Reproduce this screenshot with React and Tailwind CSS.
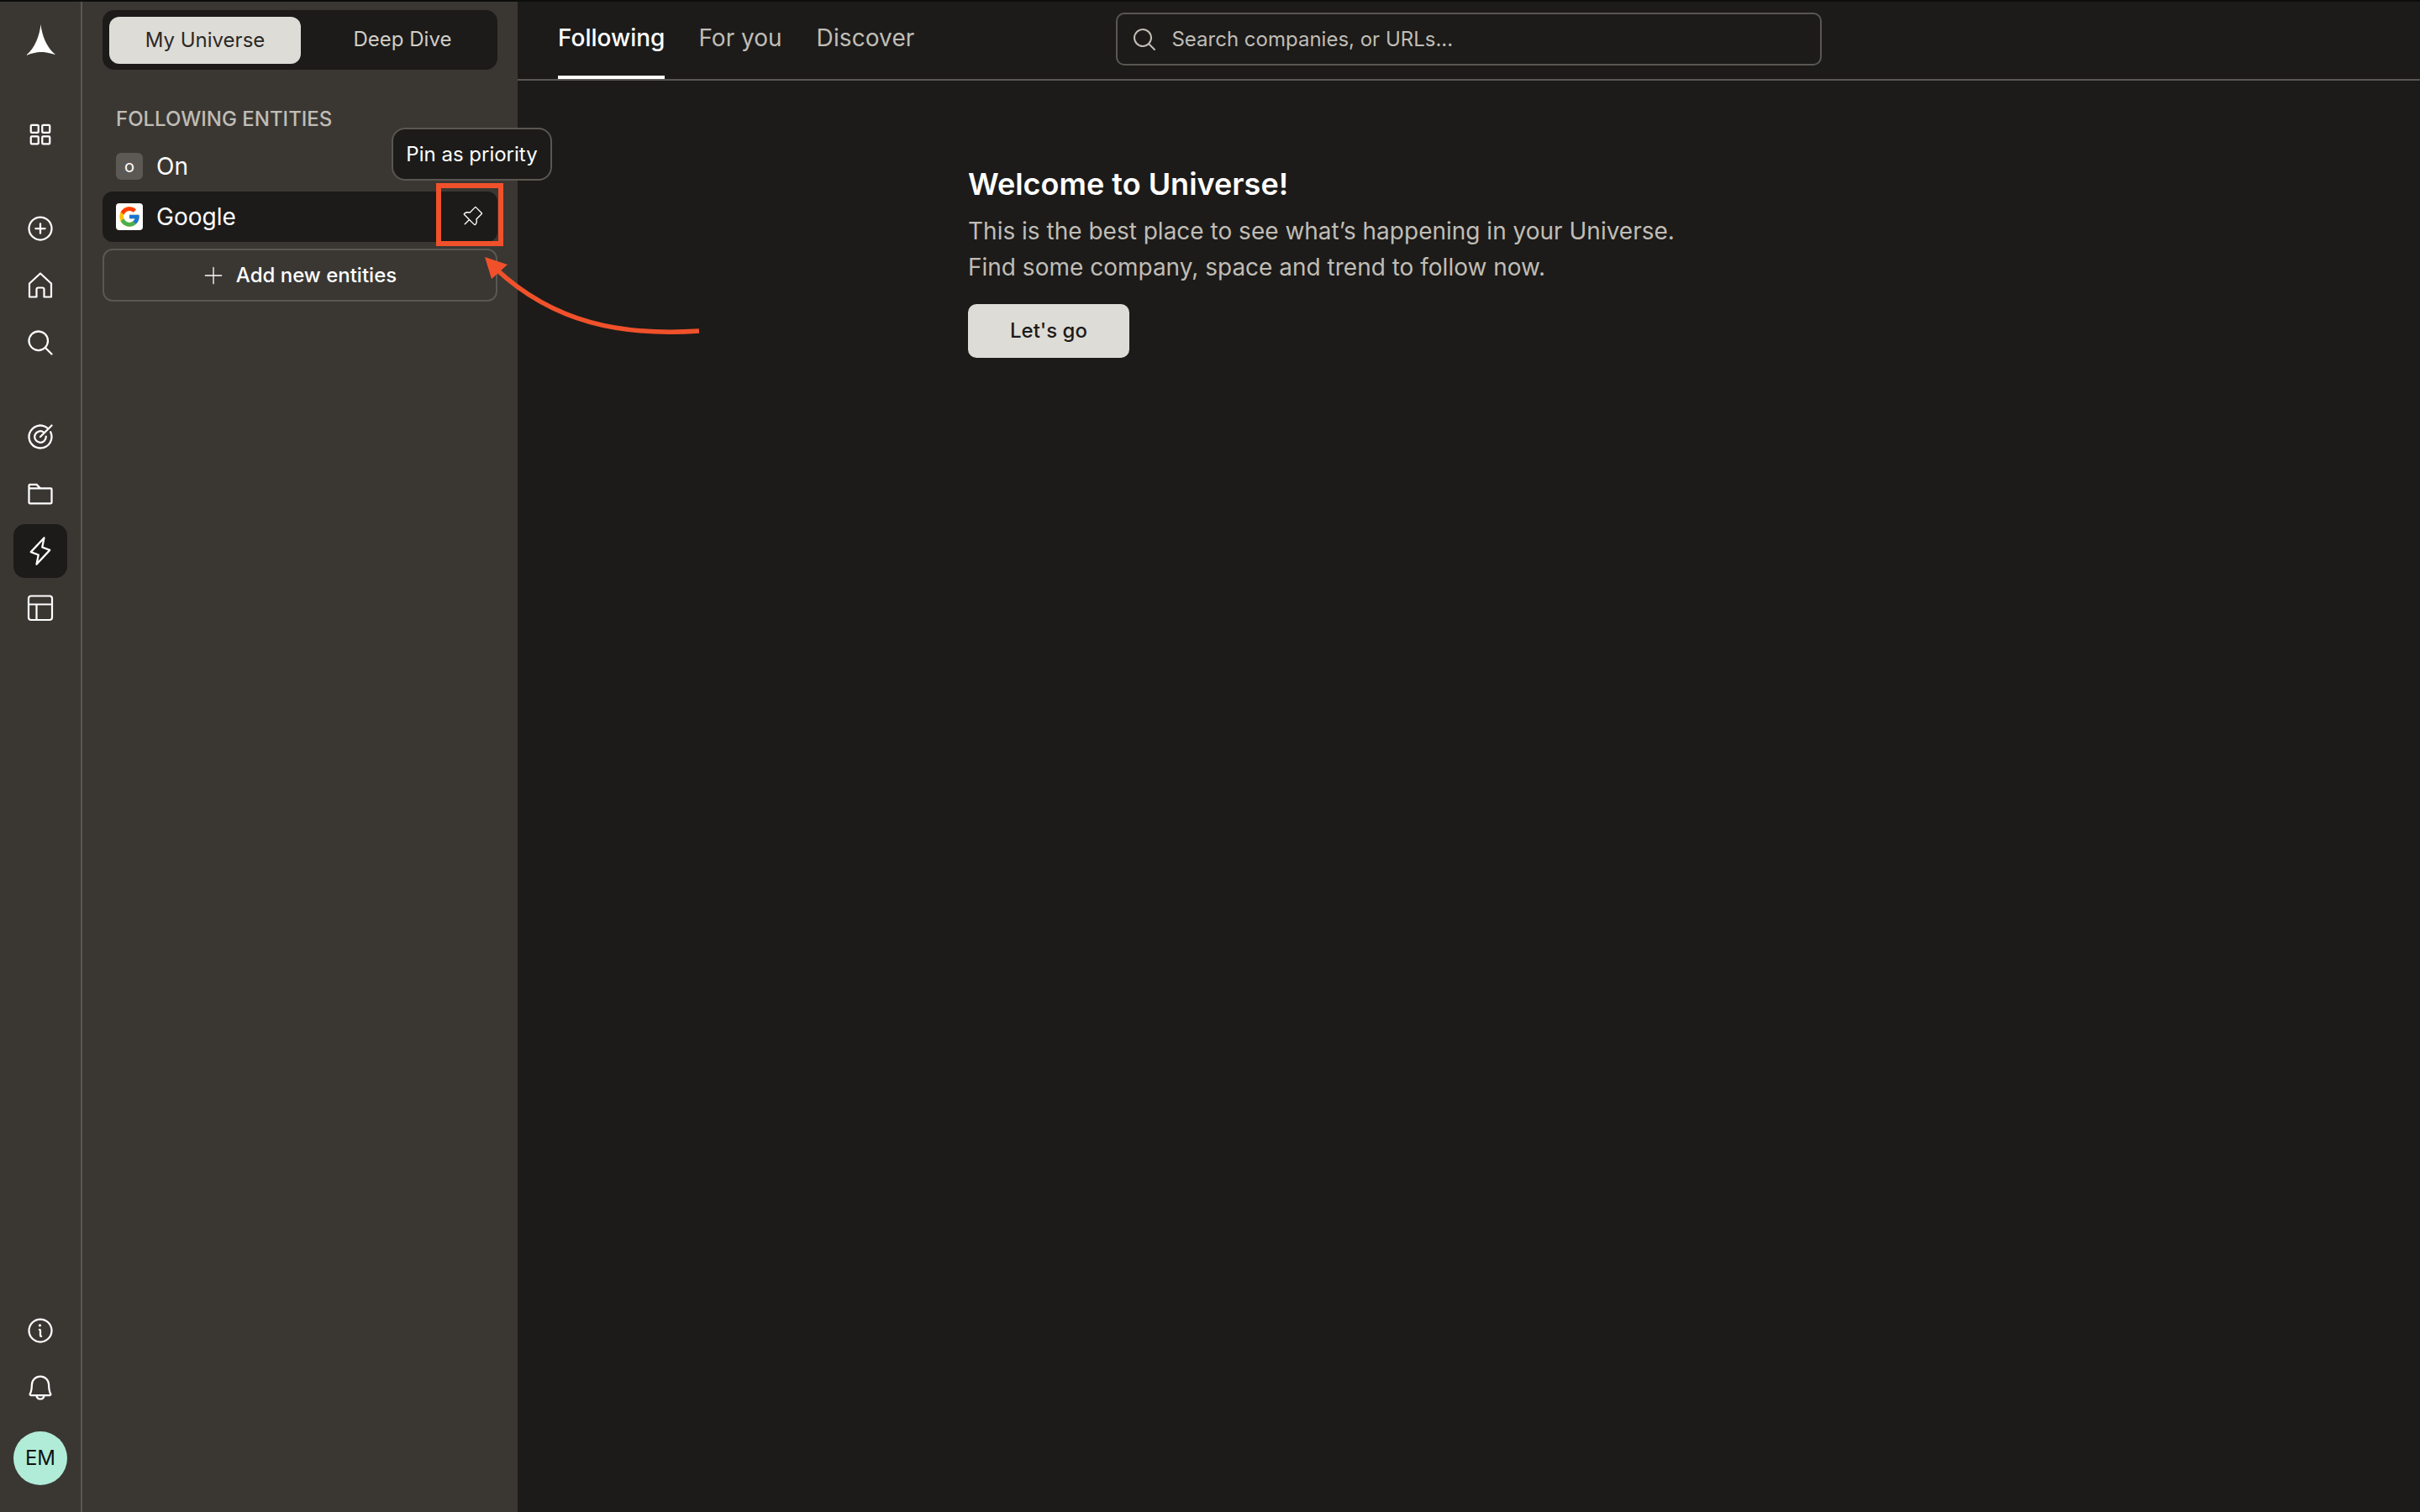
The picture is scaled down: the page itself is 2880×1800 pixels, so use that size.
import React from 'react';
import {
  PiSquaresFour,
  PiPlusCircle,
  PiMagnifyingGlass,
  PiTarget,
  PiFolder,
  PiLightning,
  PiInfo,
  PiBell,
  PiPushPinLight,
  PiPlusLight,
} from 'react-icons/pi';
import { FcGoogle } from 'react-icons/fc';

const RailIcon = ({ icon: Icon, active }) => (
  <div className={`w-16 h-16 rounded-[14px] flex items-center justify-center text-white ${active ? 'bg-[#1c1b19]' : ''}`}>
    <Icon size={36} />
  </div>
);

const HomeIcon = ({ size }) => (
  <svg width={size} height={size} viewBox="0 0 36 36" fill="none" stroke="currentColor" strokeWidth="2.2" strokeLinejoin="round">
    <path d="M5 15.5 L18 3.5 L31 15.5 V31.5 H22.5 V22.5 Q22.5 20.5 20.5 20.5 H15.5 Q13.5 20.5 13.5 22.5 V31.5 H5 Z" />
  </svg>
);

const LayoutIcon = ({ size }) => (
  <svg width={size} height={size} viewBox="0 0 36 36" fill="none" stroke="currentColor" strokeWidth="2.2">
    <rect x="4" y="3.5" width="28" height="28.5" rx="3" />
    <path d="M4 13.5 H32 M13.5 13.5 V32" />
  </svg>
);

const Logo = () => (
  <svg width="35" height="37" viewBox="0 0 35 37" fill="white">
    <path d="M17.5 0 C19 13 24 27 35 36 C26 33.5 21 33 17.5 33 C13 33 8 34 0 37 C11 28 16 13 17.5 0 Z" />
  </svg>
);

const Rail = () => (
  <aside className="w-[98px] shrink-0 h-full bg-[#3a3733] border-r-2 border-[#5a5752] flex flex-col items-center px-4">
    <div className="mt-[27px]"><Logo /></div>
    <div className="mt-[62px]"><RailIcon icon={PiSquaresFour} /></div>
    <div className="mt-[48px] flex flex-col gap-[4px]">
      <RailIcon icon={PiPlusCircle} />
      <RailIcon icon={HomeIcon} />
      <RailIcon icon={PiMagnifyingGlass} />
    </div>
    <div className="mt-[48px] flex flex-col gap-[4px]">
      <RailIcon icon={PiTarget} />
      <RailIcon icon={PiFolder} />
      <RailIcon icon={PiLightning} active />
      <RailIcon icon={LayoutIcon} />
    </div>
    <div className="mt-auto flex flex-col gap-[4px]">
      <RailIcon icon={PiInfo} />
      <RailIcon icon={PiBell} />
    </div>
    <div className="mt-[20px] mb-[32px] w-16 h-16 rounded-full bg-[#b1ecd9] flex items-center justify-center text-[#12110f] text-[24px]">
      EM
    </div>
  </aside>
);

const EntityPanel = () => (
  <section className="w-[518px] shrink-0 h-full bg-[#3a3733] pl-6 pr-6 pt-[10px] relative">
    <div className="h-[71px] rounded-[14px] bg-[#1c1b19] flex items-center px-2">
      <div className="w-[228px] h-[56px] rounded-[12px] bg-[#dedcd7] text-[#2b2926] text-[24px] flex items-center justify-center">
        My Universe
      </div>
      <div className="flex-1 pl-[16px] text-[#d0cec8] text-[24px] text-center -mt-[2px]">Deep Dive</div>
    </div>
    <div className="mt-[42px] pl-4 text-[24px] leading-[34px] font-medium text-[#c0bdb6]">FOLLOWING ENTITIES</div>
    <div className="mt-[17px] h-[44px] flex items-center gap-4 pl-4">
      <div className="w-8 h-8 rounded-[6px] bg-[#5c5955] text-white text-[20px] flex items-center justify-center">o</div>
      <span className="text-white text-[28px]">On</span>
    </div>
    <div className="mt-[8px] h-[60px] rounded-[12px] bg-[#1c1b19] flex items-center gap-4 pl-4 pr-4">
      <div className="w-8 h-8 rounded-[4px] bg-white flex items-center justify-center"><FcGoogle size={28} /></div>
      <span className="text-white text-[28px]">Google</span>
      <PiPushPinLight size={28} className="ml-auto text-white" />
    </div>
    <button className="mt-[8px] w-full h-[63px] rounded-[12px] border-2 border-[#5a5752] text-white text-[24px] font-medium flex items-center justify-center gap-[13px] pr-[2px]">
      <PiPlusLight size={28} />
      Add new entities
    </button>
    {/* tooltip over the row */}
    <div className="absolute left-[368px] top-[150px] w-[191px] h-[63px] rounded-[16px] border-2 border-[#5a5752] bg-[#1c1b19] text-white text-[24px] flex items-center justify-center">
      Pin as priority
    </div>
  </section>
);

const Main = () => (
  <main className="flex-1 h-full bg-[#1c1b19]">
    <header className="h-[94px] border-b-2 border-[#5a5752] flex items-stretch pl-12">
      <nav className="flex gap-10">
        <a className="h-[92px] pt-[23px] border-b-4 border-white text-white text-[28px] leading-[40px] font-medium">Following</a>
        <a className="h-[92px] pt-[23px] text-[#c0bdb6] text-[28px] leading-[40px]">For you</a>
        <a className="h-[92px] pt-[23px] pl-[1px] text-[#c0bdb6] text-[28px] leading-[40px] tracking-[0.1px]">Discover</a>
      </nav>
      <div className="ml-[240px] mt-[13px] w-[840px] h-[63px] rounded-[10px] border-2 border-[#5a5752] flex items-center gap-4 pl-4 text-[#c0bdb6]">
        <PiMagnifyingGlass size={32} />
        <span className="text-[24px]">Search companies, or URLs...</span>
      </div>
    </header>
    <div className="pl-[536px] pt-[98px]">
      <h1 className="text-white text-[36px] leading-[50px] font-semibold">Welcome to Universe!</h1>
      <p className="mt-[10px] text-[#c0bdb6] text-[28px] leading-[43px]">
        This is the best place to see what’s happening in your Universe.
        <br />
        Find some company, space and trend to follow now.
      </p>
      <button className="mt-[22px] w-[192px] h-[64px] rounded-[10px] bg-[#dedcd7] text-[#1c1b19] text-[24px] font-medium">
        Let's go
      </button>
    </div>
  </main>
);

// red callout drawn on top of the screenshot
const Annotation = () => (
  <svg className="absolute -top-[2px] left-0 pointer-events-none" width="2880" height="1800" viewBox="0 0 2880 1800" fill="none">
    <rect x="522" y="221" width="74" height="69" stroke="#f0512b" strokeWidth="6" />
    <path d="M832 394 C740 400 660 385 590 320" stroke="#f0512b" strokeWidth="5.5" />
    <path d="M577 306 L604 315 L585 332 Z" fill="#f0512b" />
  </svg>
);

export default function App() {
  return (
    <div className="relative w-[2880px] h-[1800px] overflow-hidden flex border-t-2 border-[#0d0d0c] font-['Inter',sans-serif]">
      <Rail />
      <EntityPanel />
      <Main />
      <Annotation />
    </div>
  );
}
